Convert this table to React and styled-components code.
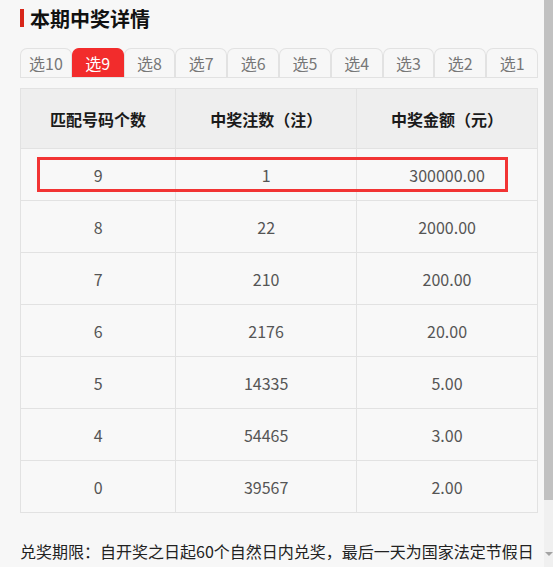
import React, { useState } from "react";
import styled, { createGlobalStyle } from "styled-components";

const TABS = ["选10", "选9", "选8", "选7", "选6", "选5", "选4", "选3", "选2", "选1"];

const ROWS = [
	{ match: "9", count: "1", amount: "300000.00" },
	{ match: "8", count: "22", amount: "2000.00" },
	{ match: "7", count: "210", amount: "200.00" },
	{ match: "6", count: "2176", amount: "20.00" },
	{ match: "5", count: "14335", amount: "5.00" },
	{ match: "4", count: "54465", amount: "3.00" },
	{ match: "0", count: "39567", amount: "2.00" },
];

const GlobalStyle = createGlobalStyle`
	html, body {
		margin: 0;
		padding: 0;
		background: #f7f7f7;
		overflow: hidden;
	}
	body {
		font-family: "Noto Sans CJK SC", "Noto Sans", sans-serif;
	}
`;

const Page = styled.div`
	display: flex;
	width: 553px;
	height: 567px;
	overflow: hidden;
	background: #f7f7f7;
`;

const Content = styled.div`
	flex: 1;
	padding: 4px 6px 0 20px;
	min-width: 0;
`;

const Title = styled.h2`
	display: flex;
	align-items: center;
	gap: 6px;
	margin: 0;
	height: 28px;
	font-size: 20px;
	font-weight: bold;
	color: #111;

	&::before {
		content: "";
		width: 4px;
		height: 18px;
		background: #d8261a;
	}
`;

const TabBar = styled.div`
	display: flex;
	margin-top: 16px;
	border-bottom: 1px solid #e2e2e2;
`;

const Tab = styled.button`
	flex: 1;
	height: 29px;
	padding: 0;
	border: 1px solid #e2e2e2;
	border-bottom: none;
	border-radius: 7px 7px 0 0;
	background: ${({ $active }) => ($active ? "#f22c2c" : "#f7f7f7")};
	border-color: ${({ $active }) => ($active ? "#f22c2c" : "#e2e2e2")};
	color: ${({ $active }) => ($active ? "#fff" : "#777")};
	font-family: inherit;
	font-size: 16px;
	line-height: 28px;
	cursor: pointer;
`;

const TableWrap = styled.div`
	position: relative;
	margin-top: 10px;
`;

const Table = styled.table`
	width: 100%;
	border-collapse: collapse;
	table-layout: fixed;
	font-size: 16px;
`;

const Th = styled.th`
	width: ${({ $w }) => $w};
	height: 59px;
	padding: 0;
	background: #eeeeee;
	border: 1px solid #e2e2e2;
	color: #1a1a1a;
	font-weight: bold;
`;

const Td = styled.td`
	height: 51px;
	padding: 0;
	border: 1px solid #e2e2e2;
	background: #f8f8f8;
	color: #555;
	text-align: center;
`;

const Highlight = styled.div`
	position: absolute;
	left: 17px;
	top: 69px;
	width: 465px;
	height: 29px;
	border: 3px solid #f23434;
	pointer-events: none;
`;

const Note = styled.p`
	margin: 26px 0 0;
	font-size: 16px;
	line-height: 24px;
	color: #222;
	white-space: nowrap;
`;

const Scrollbar = styled.div`
	width: 9px;
	display: flex;
	flex-direction: column;
	background: #f0f0f0;
`;

const Thumb = styled.div`
	height: 500px;
	background: #c1c1c1;
`;

const Arrow = styled.div`
	margin-top: auto;
	margin-bottom: 11px;
	margin-left: 1px;
	width: 0;
	height: 0;
	border-left: 4px solid transparent;
	border-right: 4px solid transparent;
	border-top: 4px solid #a3a3a3;
`;

export default function App() {
	const [active, setActive] = useState("选9");

	return (
		<Page>
			<GlobalStyle />
			<Content>
				<Title>本期中奖详情</Title>
				<TabBar>
					{TABS.map((tab) => (
						<Tab key={tab} $active={active === tab} onClick={() => setActive(tab)}>
							{tab}
						</Tab>
					))}
				</TabBar>
				<TableWrap>
					<Table>
						<thead>
							<tr>
								<Th $w="30%">匹配号码个数</Th>
								<Th $w="35%">中奖注数（注）</Th>
								<Th $w="35%">中奖金额（元）</Th>
							</tr>
						</thead>
						<tbody>
							{ROWS.map((row) => (
								<tr key={row.match}>
									<Td>{row.match}</Td>
									<Td>{row.count}</Td>
									<Td>{row.amount}</Td>
								</tr>
							))}
						</tbody>
					</Table>
					<Highlight />
				</TableWrap>
				<Note>兑奖期限：自开奖之日起60个自然日内兑奖，最后一天为国家法定节假日</Note>
			</Content>
			<Scrollbar>
				<Thumb />
				<Arrow />
			</Scrollbar>
		</Page>
	);
}
